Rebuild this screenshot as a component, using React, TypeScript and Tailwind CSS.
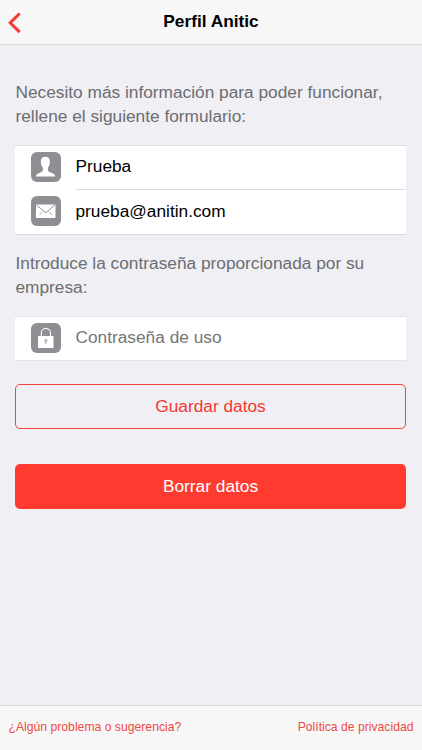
import type { ReactNode } from 'react'

function PersonIcon() {
  return (
    <svg viewBox="0 0 30 30" className="size-[30px]" fill="#fff">
      <path d="M14.300 4.800c3.100 0 4.600 2 4.600 4.900 0 2.700-.8 4.700-2 6v2.900c.3 1.200 2 1.700 3.700 2.300 2.200.8 3.500 1.600 3.700 3.700H4.900c.2-2.100 1.500-2.900 3.700-3.700 1.700-.6 3-1.100 3.300-2.300v-2.900c-1.200-1.300-2.100-3.300-2.100-6 0-2.900 1.400-4.900 4.500-4.900z" />
    </svg>
  )
}

function MailIcon() {
  return (
    <svg viewBox="0 0 30 30" className="size-[30px]">
      <rect x="5" y="8.500" width="19.500" height="13.500" fill="#fff" />
      <path d="M5.500 9l9.300 7.700L24 9" fill="none" stroke="#8e8e93" strokeWidth="1" />
      <path d="M8.500 19l3-3.500M21 19l-3-3.500" fill="none" stroke="#8e8e93" strokeWidth="0.700" />
    </svg>
  )
}

function LockIcon() {
  return (
    <svg viewBox="0 0 30 30" className="size-[30px]">
      <path d="M10.300 13.500V10a4.600 4.600 0 0 1 9.200 0v3.500" fill="none" stroke="#fff" strokeWidth="1.100" />
      <rect x="7" y="13" width="15.500" height="12" fill="#fff" />
      <circle cx="14.800" cy="17.500" r="1.100" fill="none" stroke="#8e8e93" strokeWidth="0.900" />
      <path d="M14.800 18.600v2.200" stroke="#8e8e93" strokeWidth="0.900" />
    </svg>
  )
}

function Row({ icon, children, last }: { icon: ReactNode; children: ReactNode; last?: boolean }) {
  return (
    <div className="flex h-[44px] items-stretch pl-[16px]">
      <div className="mt-[6px] size-[30px] shrink-0 overflow-hidden rounded-[6px] bg-[#8e8e93]">{icon}</div>
      <div className={last ? 'ml-[14.500px] flex flex-1 items-center pb-px' : 'ml-[14.500px] flex flex-1 items-center border-b border-[#dcdcdf] pb-px'}>
        {children}
      </div>
    </div>
  )
}

export default function App() {
  return (
    <div className="flex h-[750px] w-[422px] flex-col bg-[#efeff4] font-['Liberation_Sans',Arial,sans-serif] text-[17.300px] text-black">
      <header className="relative flex h-[45px] shrink-0 items-center justify-center border-b border-[#dadadd] bg-[#f7f7f8]">
        <button className="absolute top-[12px] left-[8px]" aria-label="Atrás">
          <svg width="14" height="22" viewBox="0 0 14 22" fill="none" stroke="#f33a31" strokeWidth="3">
            <path d="M11.700 1.500L2.200 10.800l9.500 9.300" />
          </svg>
        </button>
        <h1 className="font-bold">Perfil Anitic</h1>
      </header>

      <main className="flex-1 pt-[35px] pr-[16px] pl-[15px]">
        <p className="pl-[0.500px] leading-[24px] text-[#6d6d72]">
          Necesito más información para poder funcionar,
          <br />
          rellene el siguiente formulario:
        </p>

        <div className="mt-[17px] border-y border-[#dcdcdf] bg-white">
          <Row icon={<PersonIcon />}>Prueba</Row>
          <Row icon={<MailIcon />} last>prueba@anitin.com</Row>
        </div>

        <p className="mt-[17px] pl-[0.500px] leading-[23.500px] text-[#6d6d72]">
          Introduce la contraseña proporcionada por su
          <br />
          empresa:
        </p>

        <div className="mt-[17px] h-[45px] border-y border-[#e3e3e7] bg-white">
          <Row icon={<LockIcon />} last>
            <span className="pb-px text-[#757575]">Contraseña de uso</span>
          </Row>
        </div>

        <button className="mt-[23px] block h-[45px] w-full rounded-[5px] border border-[#f0453d] text-[#f5392f]">
          Guardar datos
        </button>
        <button className="mt-[35px] block h-[45px] w-full rounded-[5px] bg-[#ff3b30] text-white">
          Borrar datos
        </button>
      </main>

      <footer className="flex h-[45px] shrink-0 items-center justify-between border-t border-[#dadadd] bg-[#f7f7f8] px-[8.500px] pb-[2px] text-[12.200px] text-[#ee4a42]">
        <a>¿Algún problema o sugerencia?</a>
        <a>Política de privacidad</a>
      </footer>
    </div>
  )
}
